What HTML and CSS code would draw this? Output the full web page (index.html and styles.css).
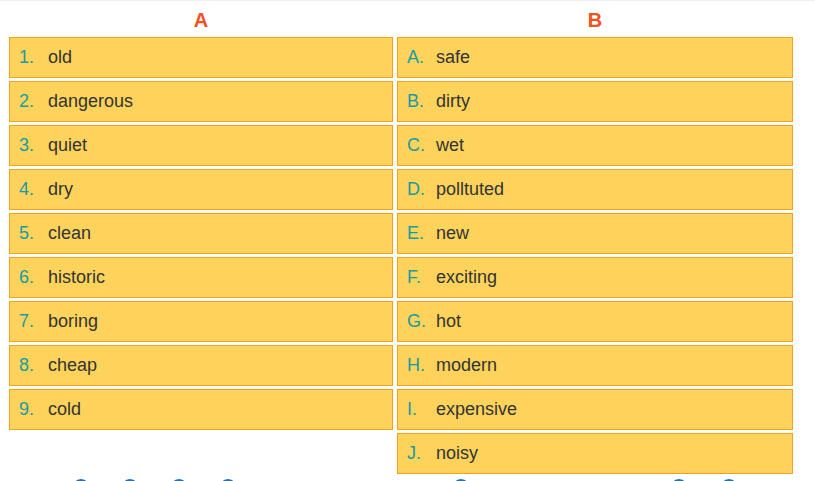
FILE: index.html
```html
<!DOCTYPE html>
<html lang="en">
<head>
<meta charset="utf-8">
<title>Match A and B</title>
<link rel="stylesheet" href="styles.css">
</head>
<body>
<div class="page">
  <div class="board">
    <div class="col col-a">
      <div class="head">A</div>
      <ul class="list">
        <li class="cell"><span class="mark">1.</span><span class="word">old</span></li>
        <li class="cell"><span class="mark">2.</span><span class="word">dangerous</span></li>
        <li class="cell"><span class="mark">3.</span><span class="word">quiet</span></li>
        <li class="cell"><span class="mark">4.</span><span class="word">dry</span></li>
        <li class="cell"><span class="mark">5.</span><span class="word">clean</span></li>
        <li class="cell"><span class="mark">6.</span><span class="word">historic</span></li>
        <li class="cell"><span class="mark">7.</span><span class="word">boring</span></li>
        <li class="cell"><span class="mark">8.</span><span class="word">cheap</span></li>
        <li class="cell"><span class="mark">9.</span><span class="word">cold</span></li>
      </ul>
    </div>
    <div class="col col-b">
      <div class="head">B</div>
      <ul class="list">
        <li class="cell"><span class="mark">A.</span><span class="word">safe</span></li>
        <li class="cell"><span class="mark">B.</span><span class="word">dirty</span></li>
        <li class="cell"><span class="mark">C.</span><span class="word">wet</span></li>
        <li class="cell"><span class="mark">D.</span><span class="word">polltuted</span></li>
        <li class="cell"><span class="mark">E.</span><span class="word">new</span></li>
        <li class="cell"><span class="mark">F.</span><span class="word">exciting</span></li>
        <li class="cell"><span class="mark">G.</span><span class="word">hot</span></li>
        <li class="cell"><span class="mark">H.</span><span class="word">modern</span></li>
        <li class="cell"><span class="mark">I.</span><span class="word">expensive</span></li>
        <li class="cell"><span class="mark">J.</span><span class="word">noisy</span></li>
      </ul>
    </div>
  </div>
  <div class="dots">
    <div class="dots-a">
      <span class="dot"></span><span class="dot"></span><span class="dot"></span><span class="dot"></span>
    </div>
    <div class="dots-b">
      <span class="dot"></span><span class="dot dot-far"></span><span class="dot dot-near"></span>
    </div>
  </div>
</div>
</body>
</html>
```

FILE: styles.css
```css
html {
  overflow: hidden;
}
body {
  margin: 0;
  background: #ffffff;
  border-top: 1px solid #f0f0f0;
  font-family: "Liberation Sans", Arial, sans-serif;
}
.page {
  padding-left: 9px;
}
.board {
  display: grid;
  grid-template-columns: 384px 396px;
  column-gap: 4px;
  align-items: start;
}
.head {
  padding-top: 7px;
  margin-bottom: 5px;
  line-height: 24px;
  font-size: 20px;
  font-weight: bold;
  color: #f4511e;
  text-align: center;
}
.list {
  list-style: none;
  margin: 0;
  padding: 0;
  display: flex;
  flex-direction: column;
  gap: 3px;
}
.cell {
  display: flex;
  align-items: center;
  height: 39px;
  background: #fdd35b;
  border: 1px solid #f5a11c;
  font-size: 18px;
  line-height: 39px;
  color: #333333;
}
.mark {
  width: 29px;
  padding-left: 9px;
  color: #1b9ba1;
  flex: none;
}
.word {
  color: #333333;
}
.dots {
  display: grid;
  grid-template-columns: 384px 396px;
  column-gap: 4px;
  margin-top: 5px;
}
.dots-a,
.dots-b {
  display: flex;
}
.dots-a {
  padding-left: 63px;
  gap: 31px;
}
.dots-b {
  padding-left: 55px;
}
.dot {
  width: 14px;
  height: 14px;
  border: 2px solid #1a74c6;
  border-radius: 50%;
  flex: none;
}
.dots-b .dot-far {
  margin-left: 200px;
}
.dots-b .dot-near {
  margin-left: 32px;
}
```
